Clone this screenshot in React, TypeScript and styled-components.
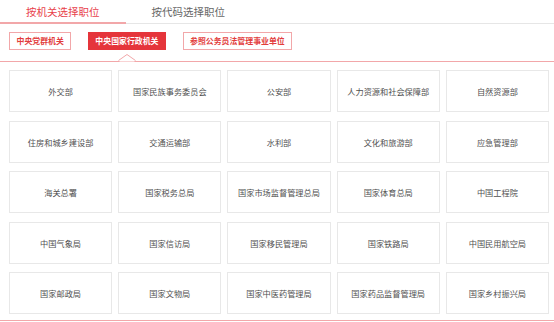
import * as React from "react";
import styled, { createGlobalStyle } from "styled-components";

const Red = "#e5353b";
const Pink = "#f2a7a9";

const GlobalStyle = createGlobalStyle`
    body {
        margin: 0;
        background: #ffffff;
        font-family: "Noto Sans CJK SC", "Noto Sans", sans-serif;
    }
`;

const Page = styled.div`
    width: 554px;
    height: 322px;
    overflow: hidden;
    background: #ffffff;
`;

const TabBar = styled.div`
    display: flex;
    height: 23px;
    border-bottom: 1px solid #e6e6e6;
`;

const Tab = styled.div<{ $active?: boolean }>`
    padding: 0 26px;
    height: ${(p) => (p.$active ? "22px" : "23px")};
    line-height: 23px;
    font-size: 10.5px;
    color: ${(p) => (p.$active ? "#e8414b" : "#666666")};
    border-bottom: ${(p) => (p.$active ? `2px solid ${Pink}` : "none")};
    margin-bottom: ${(p) => (p.$active ? "-1px" : "0")};
    white-space: nowrap;
`;

const FilterRow = styled.div`
    display: flex;
    gap: 16.5px;
    padding: 8px 9px 0;
    margin-bottom: 11px;
`;

const Filter = styled.div<{ $active?: boolean }>`
    position: relative;
    height: 18px;
    box-sizing: border-box;
    padding: 0 6.5px;
    line-height: 16px;
    font-size: 7.9px;
    font-weight: 700;
    white-space: nowrap;
    color: ${(p) => (p.$active ? "#ffffff" : "#e23c3c")};
    background: ${(p) => (p.$active ? Red : "#ffffff")};
    border: 1px solid ${(p) => (p.$active ? Red : Pink)};
`;

const Caret = styled.svg`
    position: absolute;
    left: 50%;
    bottom: -12px;
    transform: translateX(-50%);
    overflow: visible;
`;

const Panel = styled.div`
    border-top: 1px solid ${Pink};
    border-bottom: 1px solid ${Pink};
    padding: 8px 5px 6px 9px;
    display: grid;
    grid-template-columns: repeat(5, 1fr);
    grid-auto-rows: 42px;
    column-gap: 6px;
    row-gap: 8.5px;
`;

const Card = styled.div`
    display: flex;
    align-items: center;
    justify-content: center;
    box-sizing: border-box;
    border: 1px solid #e8e8e8;
    font-size: 8.2px;
    color: #505050;
    white-space: nowrap;
`;

const filters = ["中央党群机关", "中央国家行政机关", "参照公务员法管理事业单位"];

const units = [
    "外交部", "国家民族事务委员会", "公安部", "人力资源和社会保障部", "自然资源部",
    "住房和城乡建设部", "交通运输部", "水利部", "文化和旅游部", "应急管理部",
    "海关总署", "国家税务总局", "国家市场监督管理总局", "国家体育总局", "中国工程院",
    "中国气象局", "国家信访局", "国家移民管理局", "国家铁路局", "中国民用航空局",
    "国家邮政局", "国家文物局", "国家中医药管理局", "国家药品监督管理局", "国家乡村振兴局",
];

export default function App() {
    const active = 1;
    return (
        <Page>
            <GlobalStyle />
            <TabBar>
                <Tab $active>按机关选择职位</Tab>
                <Tab>按代码选择职位</Tab>
            </TabBar>
            <FilterRow>
                {filters.map((f, i) => (
                    <Filter key={f} $active={i === active}>
                        {f}
                        {i === active && (
                            <Caret width="17" height="8" viewBox="0 0 17 8">
                                <rect x="1" y="6.5" width="15" height="2" fill="#ffffff" />
                                <polyline
                                    points="0,7.5 8.5,1.5 17,7.5"
                                    fill="#ffffff"
                                    stroke={Pink}
                                    strokeWidth="1"
                                />
                            </Caret>
                        )}
                    </Filter>
                ))}
            </FilterRow>
            <Panel>
                {units.map((u) => (
                    <Card key={u}>{u}</Card>
                ))}
            </Panel>
        </Page>
    );
}
